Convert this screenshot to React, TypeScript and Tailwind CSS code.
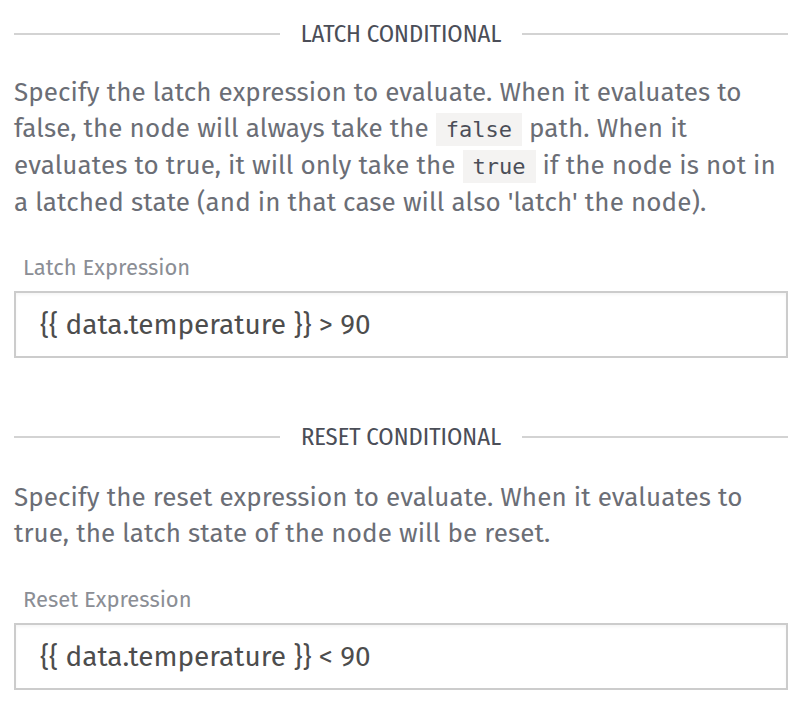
import React from 'react';

const sans = { fontFamily: '"Fira Sans", "Open Sans", "Noto Sans", sans-serif' };

const SectionHeader: React.FC<{ title: string }> = ({ title }) => (
  <div className="flex items-center h-[30px]">
    <div className="flex-1 h-[2px] bg-[#d3d3d3]" />
    <span
      className="px-[21px] text-[24.5px] leading-[30px] text-[#4b4e58]"
      style={{ fontFamily: '"Fira Sans Condensed", "Fira Sans", sans-serif' }}
    >
      {title}
    </span>
    <div className="flex-1 h-[2px] bg-[#d3d3d3]" />
  </div>
);

const Code: React.FC<{ children: React.ReactNode }> = ({ children }) => (
  <code
    className="bg-[#f4f3f2] px-[10px] py-[4px] text-[22px] tracking-normal text-[#4b4e58]"
    style={{ fontFamily: '"DejaVu Sans Mono", "Liberation Mono", monospace' }}
  >
    {children}
  </code>
);

const ExpressionField: React.FC<{ label: string; value: string }> = ({ label, value }) => (
  <div>
    <label className="block pl-[9px] text-[22px] leading-[28px] text-[#8b8e95]">{label}</label>
    <div className="mt-[9px] h-[67px] border-2 border-[#cccccc] shadow-[inset_0_2px_3px_rgba(0,0,0,0.04)] flex items-center pl-[24px]">
      <span className="text-[28px] text-[#4d4d4d]">{value}</span>
    </div>
  </div>
);

export default function App() {
  return (
    <div className="bg-white min-h-[712px] pl-[14px] pr-[22px] pt-[19px]" style={sans}>
      <SectionHeader title="LATCH CONDITIONAL" />
      <p className="mt-[26px] text-[26px] leading-[36px] tracking-[0.1px] text-[#6b6e76]">
        Specify the latch expression to evaluate. When it evaluates to false, the node will always take
        the <Code>false</Code> path. When it evaluates to true, it will only take the <Code>true</Code> if
        the node is not in a latched state (and in that case will also 'latch' the node).
      </p>
      <div className="mt-[33px]">
        <ExpressionField label="Latch Expression" value="{{ data.temperature }} > 90" />
      </div>

      <div className="mt-[64px]">
        <SectionHeader title="RESET CONDITIONAL" />
      </div>
      <p className="mt-[28px] text-[26px] leading-[36px] tracking-[0.1px] text-[#6b6e76]">
        Specify the reset expression to evaluate. When it evaluates to true, the latch state of the node
        will be reset.
      </p>
      <div className="mt-[34px]">
        <ExpressionField label="Reset Expression" value="{{ data.temperature }} < 90" />
      </div>
    </div>
  );
}
